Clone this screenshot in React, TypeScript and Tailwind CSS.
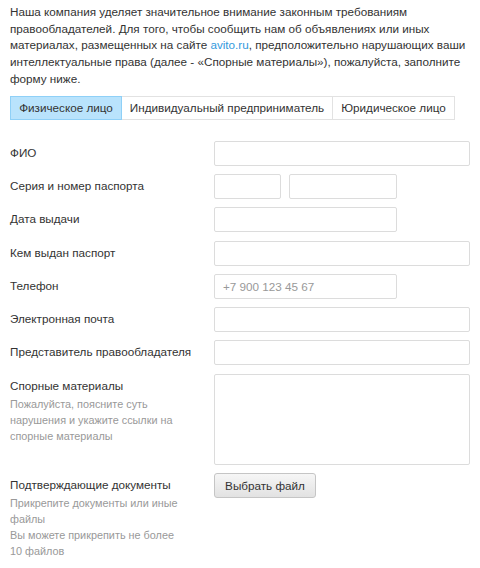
import React from 'react'

const font = { fontFamily: '"Liberation Sans", Arial, sans-serif' }

function Row({
  label,
  hint,
  children,
}: {
  label: string
  hint?: string[]
  children: React.ReactNode
}) {
  return (
    <div className="flex">
      <div className="w-[204px] shrink-0 pt-[4px] text-[11.7px] leading-[16.7px] text-[#333]">
        <div className="whitespace-nowrap">{label}</div>
        {hint && (
          <div className="mt-[1px] w-[182px] text-[10.85px] leading-[16px] text-[#999]">
            {hint.map((h) => (
              <div key={h}>{h}</div>
            ))}
          </div>
        )}
      </div>
      <div className="flex gap-[8px]">{children}</div>
    </div>
  )
}

const input =
  'h-[25px] rounded-[2px] border border-[#dcdcdc] bg-white px-[8px] text-[11.7px] text-[#999] placeholder:text-[#999] outline-none'

export default function App() {
  return (
    <div className="min-h-[568px] w-[480px] bg-white px-[10px] pt-[4px]" style={font}>
      {/* Intro */}
      <p className="text-[11.7px] leading-[16.7px] text-[#333]">
        Наша компания уделяет значительное внимание законным требованиям правообладателей. Для того, чтобы сообщить нам об
        объявлениях или иных материалах, размещенных на сайте <a href="#" className="text-[#3399dd]">avito.ru</a>,
        предположительно нарушающих ваши интеллектуальные права (далее - «Спорные материалы»), пожалуйста, заполните форму
        ниже.
      </p>

      {/* Tabs */}
      <div className="mt-[8px] flex h-[24px] whitespace-nowrap text-[11.7px] text-[#333]">
        <div className="flex w-[112px] items-center justify-center border border-[#8fd0f7] bg-[#b9e3fc]">Физическое лицо</div>
        <div className="flex w-[211px] items-center justify-center border-y border-r border-[#e2e2e2]">
          Индивидуальный предприниматель
        </div>
        <div className="flex w-[122px] items-center justify-center border-y border-r border-[#e2e2e2]">Юридическое лицо</div>
      </div>

      {/* Form */}
      <div className="mt-[21px] flex flex-col gap-[8.33px]">
        <Row label="ФИО">
          <input className={`${input} w-[256px]`} />
        </Row>
        <Row label="Серия и номер паспорта">
          <input className={`${input} w-[67px]`} />
          <input className={`${input} w-[108px]`} />
        </Row>
        <Row label="Дата выдачи">
          <input className={`${input} w-[183px]`} />
        </Row>
        <Row label="Кем выдан паспорт">
          <input className={`${input} w-[256px]`} />
        </Row>
        <Row label="Телефон">
          <input className={`${input} w-[183px]`} placeholder="+7 900 123 45 67" />
        </Row>
        <Row label="Электронная почта">
          <input className={`${input} w-[256px]`} />
        </Row>
        <Row label="Представитель правообладателя">
          <input className={`${input} w-[256px]`} />
        </Row>
        <Row
          label="Спорные материалы"
          hint={['Пожалуйста, поясните суть', 'нарушения и укажите ссылки на', 'спорные материалы']}
        >
          <textarea className="h-[91px] w-[256px] resize-none rounded-[2px] border border-[#dcdcdc] bg-white outline-none" />
        </Row>
        <Row
          label="Подтверждающие документы"
          hint={['Прикрепите документы или иные', 'файлы', 'Вы можете прикрепить не более', '10 файлов']}
        >
          <button className="h-[25px] w-[102px] rounded-[3px] border border-[#c5c5c5] bg-gradient-to-b from-[#f6f6f6] to-[#e2e2e2] text-[11.7px] text-[#333]">
            Выбрать файл
          </button>
        </Row>
      </div>
    </div>
  )
}
